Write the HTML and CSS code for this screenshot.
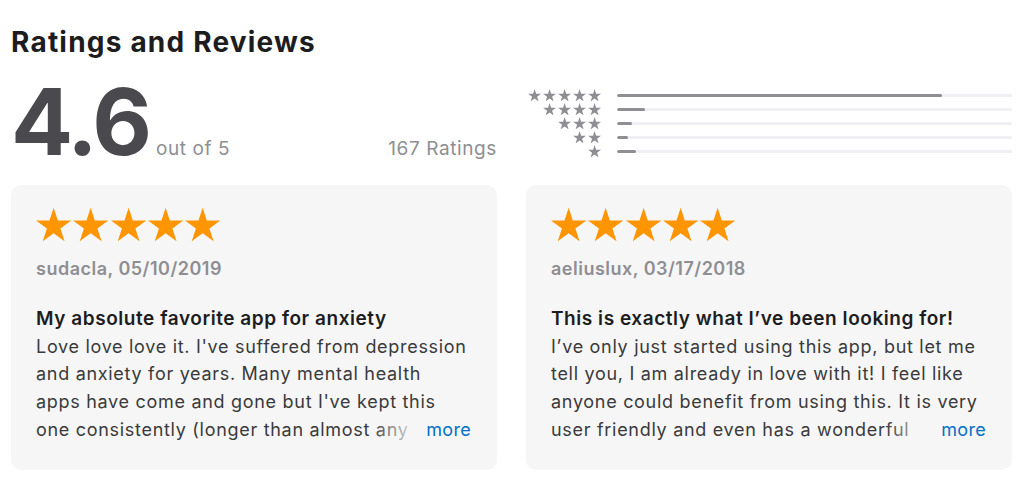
FILE: index.html
```html
<!DOCTYPE html>
<html lang="en">
<head>
<meta charset="utf-8">
<title>Ratings and Reviews</title>
<link rel="stylesheet" href="styles.css">
</head>
<body>
<svg class="defs" width="0" height="0" aria-hidden="true">
  <defs>
    <symbol id="star" viewBox="0 0 19.02 18.09">
      <polygon points="9.511,0 11.756,6.910 19.022,6.910 13.144,11.180 15.389,18.090 9.511,13.820 3.633,18.090 5.878,11.180 0,6.910 7.266,6.910"/>
    </symbol>
  </defs>
</svg>
<main class="page">
  <h1 class="heading">Ratings and Reviews</h1>
  <section class="summary">
    <div class="score">
      <span class="score-value">4.6</span>
      <span class="score-outof">out of 5</span>
      <span class="score-count">167 Ratings</span>
    </div>
    <div class="histogram">
      <div class="hist-row">
        <div class="hist-stars">
          <svg class="hstar" preserveAspectRatio="none"><use href="#star"/></svg>
          <svg class="hstar" preserveAspectRatio="none"><use href="#star"/></svg>
          <svg class="hstar" preserveAspectRatio="none"><use href="#star"/></svg>
          <svg class="hstar" preserveAspectRatio="none"><use href="#star"/></svg>
          <svg class="hstar" preserveAspectRatio="none"><use href="#star"/></svg>
        </div>
        <div class="hist-bar"><div class="hist-fill" style="width:82.2%"></div></div>
      </div>
      <div class="hist-row">
        <div class="hist-stars">
          <svg class="hstar" preserveAspectRatio="none"><use href="#star"/></svg>
          <svg class="hstar" preserveAspectRatio="none"><use href="#star"/></svg>
          <svg class="hstar" preserveAspectRatio="none"><use href="#star"/></svg>
          <svg class="hstar" preserveAspectRatio="none"><use href="#star"/></svg>
        </div>
        <div class="hist-bar"><div class="hist-fill" style="width:7%"></div></div>
      </div>
      <div class="hist-row">
        <div class="hist-stars">
          <svg class="hstar" preserveAspectRatio="none"><use href="#star"/></svg>
          <svg class="hstar" preserveAspectRatio="none"><use href="#star"/></svg>
          <svg class="hstar" preserveAspectRatio="none"><use href="#star"/></svg>
        </div>
        <div class="hist-bar"><div class="hist-fill" style="width:3.8%"></div></div>
      </div>
      <div class="hist-row">
        <div class="hist-stars">
          <svg class="hstar" preserveAspectRatio="none"><use href="#star"/></svg>
          <svg class="hstar" preserveAspectRatio="none"><use href="#star"/></svg>
        </div>
        <div class="hist-bar"><div class="hist-fill" style="width:2.9%"></div></div>
      </div>
      <div class="hist-row">
        <div class="hist-stars">
          <svg class="hstar" preserveAspectRatio="none"><use href="#star"/></svg>
        </div>
        <div class="hist-bar"><div class="hist-fill" style="width:4.9%"></div></div>
      </div>
    </div>
  </section>
  <section class="reviews">
    <article class="review">
      <div class="review-stars">
        <svg class="rstar" preserveAspectRatio="none"><use href="#star"/></svg>
        <svg class="rstar" preserveAspectRatio="none"><use href="#star"/></svg>
        <svg class="rstar" preserveAspectRatio="none"><use href="#star"/></svg>
        <svg class="rstar" preserveAspectRatio="none"><use href="#star"/></svg>
        <svg class="rstar" preserveAspectRatio="none"><use href="#star"/></svg>
      </div>
      <div class="review-meta">sudacla, 05/10/2019</div>
      <h3 class="review-title">My absolute favorite app for anxiety</h3>
      <div class="review-body">
        <p class="review-text">Love love love it. I've suffered from depression and anxiety for years. Many mental health apps have come and gone but I've kept this one consistently (longer than almost any</p>
        <a class="more" href="#">more</a>
      </div>
    </article>
    <article class="review">
      <div class="review-stars">
        <svg class="rstar" preserveAspectRatio="none"><use href="#star"/></svg>
        <svg class="rstar" preserveAspectRatio="none"><use href="#star"/></svg>
        <svg class="rstar" preserveAspectRatio="none"><use href="#star"/></svg>
        <svg class="rstar" preserveAspectRatio="none"><use href="#star"/></svg>
        <svg class="rstar" preserveAspectRatio="none"><use href="#star"/></svg>
      </div>
      <div class="review-meta">aeliuslux, 03/17/2018</div>
      <h3 class="review-title">This is exactly what I’ve been looking for!</h3>
      <div class="review-body">
        <p class="review-text">I’ve only just started using this app, but let me tell you, I am already in love with it! I feel like anyone could benefit from using this. It is very user friendly and even has a wonderful</p>
        <a class="more" href="#">more</a>
      </div>
    </article>
  </section>
</main>
</body>
</html>
```
FILE: styles.css
```css
* { box-sizing: border-box; }

html, body {
  margin: 0;
  padding: 0;
  background: #ffffff;
}

body {
  font-family: Inter, "Noto Sans", "Liberation Sans", sans-serif;
  color: #1d1d1f;
}

.defs {
  position: absolute;
  width: 0;
  height: 0;
  overflow: hidden;
}

.page {
  padding: 26px 11px 0 11px;
}

.heading {
  margin: 0;
  font-size: 28px;
  line-height: 32px;
  font-weight: 700;
  letter-spacing: 1.2px;
  color: #1d1d1f;
}

.summary {
  display: grid;
  grid-template-columns: 1fr 1fr;
  column-gap: 29px;
  margin-top: 24px;
}

.score {
  display: flex;
  align-items: baseline;
  height: 80px;
}

.score-value {
  font-size: 92px;
  line-height: 80px;
  font-weight: 700;
  letter-spacing: -3px;
  color: #4a4a4e;
}

.score-outof {
  margin-left: 7px;
  font-size: 19px;
  letter-spacing: 0.6px;
  color: #8e8e93;
}

.score-count {
  margin-left: auto;
  font-size: 19px;
  letter-spacing: 0.6px;
  color: #8e8e93;
}

.histogram {
  padding-top: 6px;
}

.hist-row {
  display: flex;
  align-items: center;
  height: 14px;
}

.hist-stars {
  width: 75px;
  display: flex;
  justify-content: flex-end;
  gap: 1.9px;
}

.hstar {
  width: 13.2px;
  height: 12.4px;
  fill: #8e8e93;
}

.hist-bar {
  flex: 1;
  margin-left: 16px;
  height: 3px;
  border-radius: 1.5px;
  background: #efeff4;
  overflow: hidden;
}

.hist-fill {
  height: 100%;
  background: #8e8e93;
  border-radius: 1.5px;
}

.reviews {
  display: grid;
  grid-template-columns: 1fr 1fr;
  column-gap: 29px;
  margin-top: 23px;
}

.review {
  background: #f6f6f6;
  border-radius: 10px;
  padding: 22px 26px 27px 25px;
  height: 285px;
}

.review-stars {
  display: flex;
  gap: 2px;
  height: 35px;
}

.rstar {
  width: 35.3px;
  height: 35px;
  fill: #ff9500;
}

.review-meta {
  margin-top: 15px;
  font-size: 18px;
  line-height: 24px;
  font-weight: 600;
  letter-spacing: 0.5px;
  color: #8e8e93;
}

.review-title {
  margin: 24px 0 0 0;
  font-size: 19px;
  line-height: 27.7px;
  font-weight: 600;
  letter-spacing: 0.55px;
  color: #1d1d1f;
}

.review-body {
  position: relative;
}

.review-text {
  margin: 0;
  font-size: 18px;
  line-height: 27.7px;
  letter-spacing: 0.7px;
  color: #3a3a3c;
  max-height: 110.8px;
  overflow: hidden;
}

.review-text::after {
  content: "";
  position: absolute;
  right: 0;
  bottom: 0;
  width: 100px;
  height: 27.7px;
  background: linear-gradient(to right, rgba(246,246,246,0) 0, #f6f6f6 48px);
}

.more {
  position: absolute;
  right: 0;
  bottom: 0;
  font-size: 18px;
  line-height: 27.7px;
  letter-spacing: 0.3px;
  color: #0070c9;
  text-decoration: none;
}
```
